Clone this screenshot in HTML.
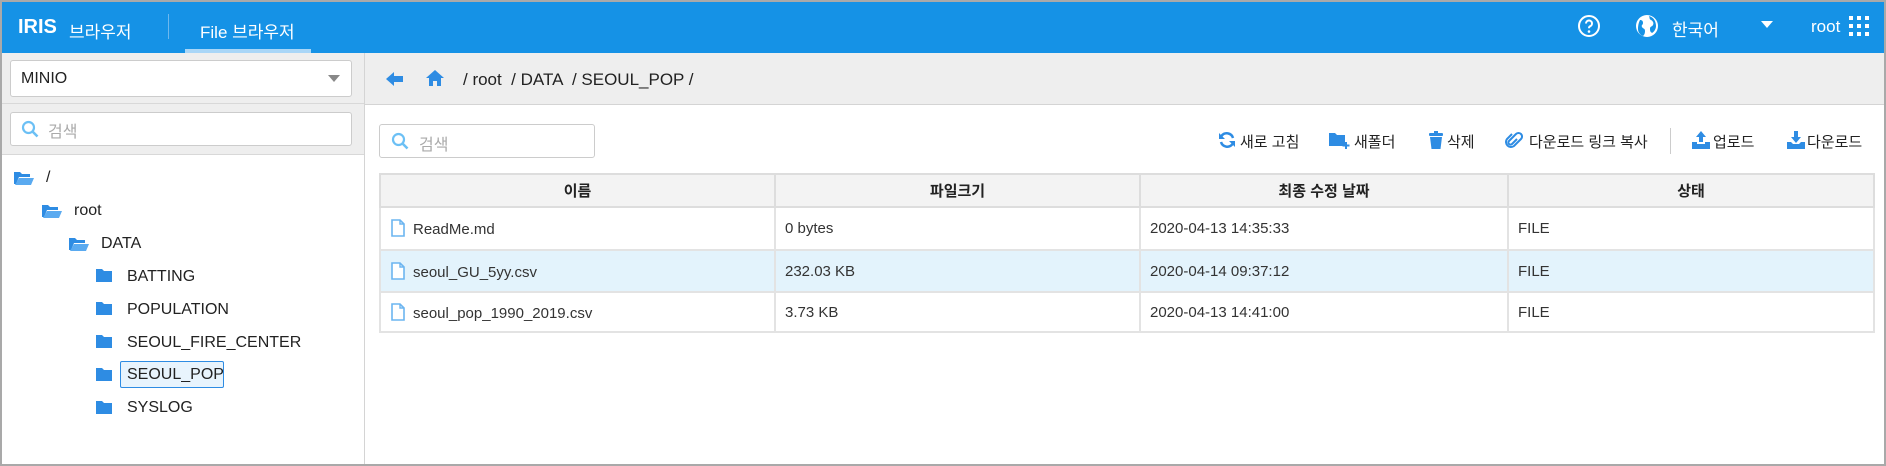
<!DOCTYPE html>
<html><head><meta charset="utf-8"><style>
*{margin:0;padding:0;box-sizing:border-box}
body{width:1886px;height:466px;overflow:hidden;background:#fff;font-family:"Liberation Sans","Noto Sans CJK KR",sans-serif;color:#333;position:relative}
.a{position:absolute;white-space:nowrap}
.frame{position:absolute;left:0;top:0;width:1886px;height:466px;border:2px solid #a9a9a9;z-index:10;pointer-events:none}
.hdr{position:absolute;left:0;top:0;width:1886px;height:53px;background:#1592e6;color:#fff}
.tree .a{font-size:16px;color:#222}
th,td{font-size:15px}
.tb{font-size:15px;color:#222}
</style></head><body>
<div class="frame"></div>
<div class="hdr">
 <div class="a" style="left:18px;top:16px;font-size:20px;font-weight:bold">IRIS</div>
 <div class="a" style="left:69px;top:18px;font-size:17px">브라우저</div>
 <div class="a" style="left:168px;top:14px;width:1px;height:25px;background:#6db8ee"></div>
 <div class="a" style="left:200px;top:18px;font-size:17px">File 브라우저</div>
 <div class="a" style="left:185px;top:49px;width:126px;height:4px;background:#a9d6f7"></div>
 <svg class="a" style="left:1577px;top:14px" width="24" height="24" viewBox="0 0 24 24"><circle cx="12" cy="12" r="10" fill="none" stroke="#fff" stroke-width="2"/><path d="M9 9.5a3 3 0 1 1 4 2.8c-.8.4-1 1-1 2" fill="none" stroke="#fff" stroke-width="2"/><circle cx="12" cy="17.5" r="1.3" fill="#fff"/></svg>
 <svg class="a" style="left:1635px;top:14px" width="24" height="24" viewBox="0 0 24 24"><circle cx="12" cy="12" r="11" fill="#fff"/><path d="M5 6c2 0 3 1 3 3s-2 2-1 4 3 1 3 4-1 4-2 5c-3-1-5-4-5-7 0-4 1-7 2-9zM14 2c1 2 0 3 2 4s3 3 2 5-3 1-3 4 1 3 2 4c2-1 4-4 4-7 0-5-3-9-7-10z" fill="#1592e6"/></svg>
 <div class="a" style="left:1672px;top:16px;font-size:17px">한국어</div>
 <div class="a" style="left:1761px;top:21px;width:0;height:0;border-left:6px solid transparent;border-right:6px solid transparent;border-top:7px solid #fff"></div>
 <div class="a" style="left:1811px;top:17px;font-size:17px">root</div>
 <svg class="a" style="left:1849px;top:16px" width="20" height="20" viewBox="0 0 20 20" fill="#fff"><rect x="0" y="0" width="4" height="4"/><rect x="8" y="0" width="4" height="4"/><rect x="16" y="0" width="4" height="4"/><rect x="0" y="8" width="4" height="4"/><rect x="8" y="8" width="4" height="4"/><rect x="16" y="8" width="4" height="4"/><rect x="0" y="16" width="4" height="4"/><rect x="8" y="16" width="4" height="4"/><rect x="16" y="16" width="4" height="4"/></svg>
</div>
<div class="a" style="left:0;top:53px;width:364px;height:101px;background:#eeeeee"></div>
<div class="a" style="left:364px;top:53px;width:1px;height:413px;background:#d4d4d4"></div>
<div class="a" style="left:10px;top:60px;width:342px;height:37px;background:#fff;border:1px solid #ccc;border-radius:3px"></div>
<div class="a" style="left:21px;top:70px;font-size:16px;color:#222">MINIO</div>
<div class="a" style="left:328px;top:75px;border-left:6px solid transparent;border-right:6px solid transparent;border-top:7px solid #888"></div>
<div class="a" style="left:0;top:103px;width:364px;height:1px;background:#d8d8d8"></div>
<div class="a" style="left:10px;top:112px;width:342px;height:34px;background:#fff;border:1px solid #ccc;border-radius:3px"></div>
<svg class="a" style="left:21px;top:120px" width="18" height="18" viewBox="0 0 18 18"><circle cx="7.5" cy="7.5" r="5.5" fill="none" stroke="#6cc0f5" stroke-width="2.2"/><path d="M11.5 11.5l5 5" stroke="#6cc0f5" stroke-width="2.6"/></svg>
<div class="a" style="left:48px;top:118px;font-size:16px;color:#aaa">검색</div>
<div class="a" style="left:0;top:154px;width:364px;height:1px;background:#d8d8d8"></div>
<div class="tree">
 <svg class="a" style="left:14px;top:170px" width="20" height="16" viewBox="0 0 20 16"><path d="M0 2h6l2 2h8v3H5L2 14H0z" fill="#2e8ce3"/><path d="M5 8h15l-3 7H1z" fill="#5aaaf0"/></svg>
 <div class="a" style="left:46px;top:169px">/</div>
 <svg class="a" style="left:42px;top:203px" width="20" height="16" viewBox="0 0 20 16"><path d="M0 2h6l2 2h8v3H5L2 14H0z" fill="#2e8ce3"/><path d="M5 8h15l-3 7H1z" fill="#5aaaf0"/></svg>
 <div class="a" style="left:74px;top:202px">root</div>
 <svg class="a" style="left:69px;top:236px" width="20" height="16" viewBox="0 0 20 16"><path d="M0 2h6l2 2h8v3H5L2 14H0z" fill="#2e8ce3"/><path d="M5 8h15l-3 7H1z" fill="#5aaaf0"/></svg>
 <div class="a" style="left:101px;top:235px">DATA</div>
 <svg class="a" style="left:96px;top:268px" width="16" height="14" viewBox="0 0 16 14"><path d="M0 1h6l2 2h8v11H0z" fill="#2e8ce3"/></svg>
 <div class="a" style="left:127px;top:268px">BATTING</div>
 <svg class="a" style="left:96px;top:301px" width="16" height="14" viewBox="0 0 16 14"><path d="M0 1h6l2 2h8v11H0z" fill="#2e8ce3"/></svg>
 <div class="a" style="left:127px;top:301px">POPULATION</div>
 <svg class="a" style="left:96px;top:334px" width="16" height="14" viewBox="0 0 16 14"><path d="M0 1h6l2 2h8v11H0z" fill="#2e8ce3"/></svg>
 <div class="a" style="left:127px;top:334px">SEOUL_FIRE_CENTER</div>
 <svg class="a" style="left:96px;top:367px" width="16" height="14" viewBox="0 0 16 14"><path d="M0 1h6l2 2h8v11H0z" fill="#2e8ce3"/></svg>
 <div class="a" style="left:120px;top:361px;width:104px;height:27px;border:1px solid #2e8ce3;background:#e8f4fd;border-radius:2px"></div>
 <div class="a" style="left:127px;top:366px">SEOUL_POP</div>
 <svg class="a" style="left:96px;top:400px" width="16" height="14" viewBox="0 0 16 14"><path d="M0 1h6l2 2h8v11H0z" fill="#2e8ce3"/></svg>
 <div class="a" style="left:127px;top:399px">SYSLOG</div>
</div>
<div class="a" style="left:365px;top:53px;width:1521px;height:52px;background:#eeeeee;border-bottom:1px solid #d4d4d4"></div>
<svg class="a" style="left:386px;top:71px" width="18" height="16" viewBox="0 0 18 16"><path d="M0 8l8-7v4h9v6H8v4z" fill="#2e8ce3"/></svg>
<svg class="a" style="left:426px;top:69px" width="18" height="18" viewBox="0 0 18 18"><path d="M9 1l9 8h-3v8h-4v-5H7v5H3V9H0z" fill="#2e8ce3"/></svg>
<div class="a" style="left:463px;top:70px;font-size:17px;color:#222">/ root &nbsp;/ DATA &nbsp;/ SEOUL_POP /</div>
<div class="a" style="left:379px;top:124px;width:216px;height:34px;border:1px solid #ccc;border-radius:3px"></div>
<svg class="a" style="left:391px;top:132px" width="18" height="18" viewBox="0 0 18 18"><circle cx="7.5" cy="7.5" r="5.5" fill="none" stroke="#6cc0f5" stroke-width="2.2"/><path d="M11.5 11.5l5 5" stroke="#6cc0f5" stroke-width="2.6"/></svg>
<div class="a" style="left:419px;top:131px;font-size:16px;color:#aaa">검색</div>
<div class="tb">
 <svg class="a" style="left:1218px;top:131px" width="18" height="18" viewBox="0 0 18 18"><path d="M15 7A6.5 6.5 0 0 0 3.5 5" fill="none" stroke="#2e8ce3" stroke-width="2.5"/><path d="M1 2v6h6z" fill="#2e8ce3"/><path d="M3 11a6.5 6.5 0 0 0 11.5 2" fill="none" stroke="#2e8ce3" stroke-width="2.5"/><path d="M17 16v-6h-6z" fill="#2e8ce3"/></svg>
 <div class="a" style="left:1240px;top:131px">새로 고침</div>
 <svg class="a" style="left:1329px;top:132px" width="22" height="18" viewBox="0 0 22 18"><path d="M0 1h6l2 2h8v11H0z" fill="#2e8ce3"/><path d="M17 10v7M13.5 13.5h7" stroke="#2e8ce3" stroke-width="2"/></svg>
 <div class="a" style="left:1354px;top:131px">새폴더</div>
 <svg class="a" style="left:1428px;top:131px" width="16" height="19" viewBox="0 0 16 19"><rect x="1" y="2" width="14" height="3" rx="1" fill="#2e8ce3"/><rect x="6" y="0" width="4" height="2" fill="#2e8ce3"/><path d="M2 6h12l-1.5 12h-9z" fill="#2e8ce3"/></svg>
 <div class="a" style="left:1447px;top:131px">삭제</div>
 <svg class="a" style="left:1505px;top:131px" width="18" height="20" viewBox="0 0 18 20"><path d="M12 8l-5 5a2 2 0 0 1-3-3l7-7a3.5 3.5 0 0 1 5 5l-7 7a5 5 0 0 1-7-7l5-5" fill="none" stroke="#2e8ce3" stroke-width="2"/></svg>
 <div class="a" style="left:1529px;top:131px">다운로드 링크 복사</div>
 <div class="a" style="left:1670px;top:128px;width:1px;height:26px;background:#ccc"></div>
 <svg class="a" style="left:1692px;top:131px" width="18" height="18" viewBox="0 0 18 18"><path d="M9 0l5 6h-3v5H7V6H4z" fill="#2e8ce3"/><path d="M0 11h5v2h8v-2h5v7H0z" fill="#2e8ce3"/></svg>
 <div class="a" style="left:1713px;top:131px">업로드</div>
 <svg class="a" style="left:1787px;top:131px" width="18" height="18" viewBox="0 0 18 18"><path d="M7 0h4v6h3l-5 6-5-6h3z" fill="#2e8ce3"/><path d="M0 11h4l2 2h6l2-2h4v7H0z" fill="#2e8ce3"/></svg>
 <div class="a" style="left:1807px;top:131px">다운로드</div>
</div>
<table class="a" style="left:379px;top:173px;width:1494px;border-collapse:collapse;table-layout:fixed">
<colgroup><col style="width:395px"><col style="width:365px"><col style="width:368px"><col style="width:366px"></colgroup>
<tr style="height:33px;background:#f3f3f3"><th style="border:2px solid #ddd;font-weight:bold;color:#222">이름</th><th style="border:2px solid #ddd;color:#222">파일크기</th><th style="border:2px solid #ddd;color:#222">최종 수정 날짜</th><th style="border:2px solid #ddd;color:#222">상태</th></tr>
<tr style="height:43px"><td style="border:2px solid #e3e3e3;padding-left:10px"><svg width="14" height="18" viewBox="0 0 14 18" style="vertical-align:-3px;margin-right:8px"><path d="M1 1h8l4 4v12H1z" fill="#fff" stroke="#6cb5f0" stroke-width="1.6"/><path d="M9 1v4h4" fill="none" stroke="#6cb5f0" stroke-width="1.4"/></svg>ReadMe.md</td><td style="border:2px solid #e3e3e3;padding-left:9px">0 bytes</td><td style="border:2px solid #e3e3e3;padding-left:9px">2020-04-13 14:35:33</td><td style="border:2px solid #e3e3e3;padding-left:9px">FILE</td></tr>
<tr style="height:42px;background:#e3f3fc"><td style="border:2px solid #e3e3e3;padding-left:10px"><svg width="14" height="18" viewBox="0 0 14 18" style="vertical-align:-3px;margin-right:8px"><path d="M1 1h8l4 4v12H1z" fill="#fff" stroke="#6cb5f0" stroke-width="1.6"/><path d="M9 1v4h4" fill="none" stroke="#6cb5f0" stroke-width="1.4"/></svg>seoul_GU_5yy.csv</td><td style="border:2px solid #e3e3e3;padding-left:9px">232.03 KB</td><td style="border:2px solid #e3e3e3;padding-left:9px">2020-04-14 09:37:12</td><td style="border:2px solid #e3e3e3;padding-left:9px">FILE</td></tr>
<tr style="height:40px"><td style="border:2px solid #e3e3e3;padding-left:10px"><svg width="14" height="18" viewBox="0 0 14 18" style="vertical-align:-3px;margin-right:8px"><path d="M1 1h8l4 4v12H1z" fill="#fff" stroke="#6cb5f0" stroke-width="1.6"/><path d="M9 1v4h4" fill="none" stroke="#6cb5f0" stroke-width="1.4"/></svg>seoul_pop_1990_2019.csv</td><td style="border:2px solid #e3e3e3;padding-left:9px">3.73 KB</td><td style="border:2px solid #e3e3e3;padding-left:9px">2020-04-13 14:41:00</td><td style="border:2px solid #e3e3e3;padding-left:9px">FILE</td></tr>
</table>
</body></html>
